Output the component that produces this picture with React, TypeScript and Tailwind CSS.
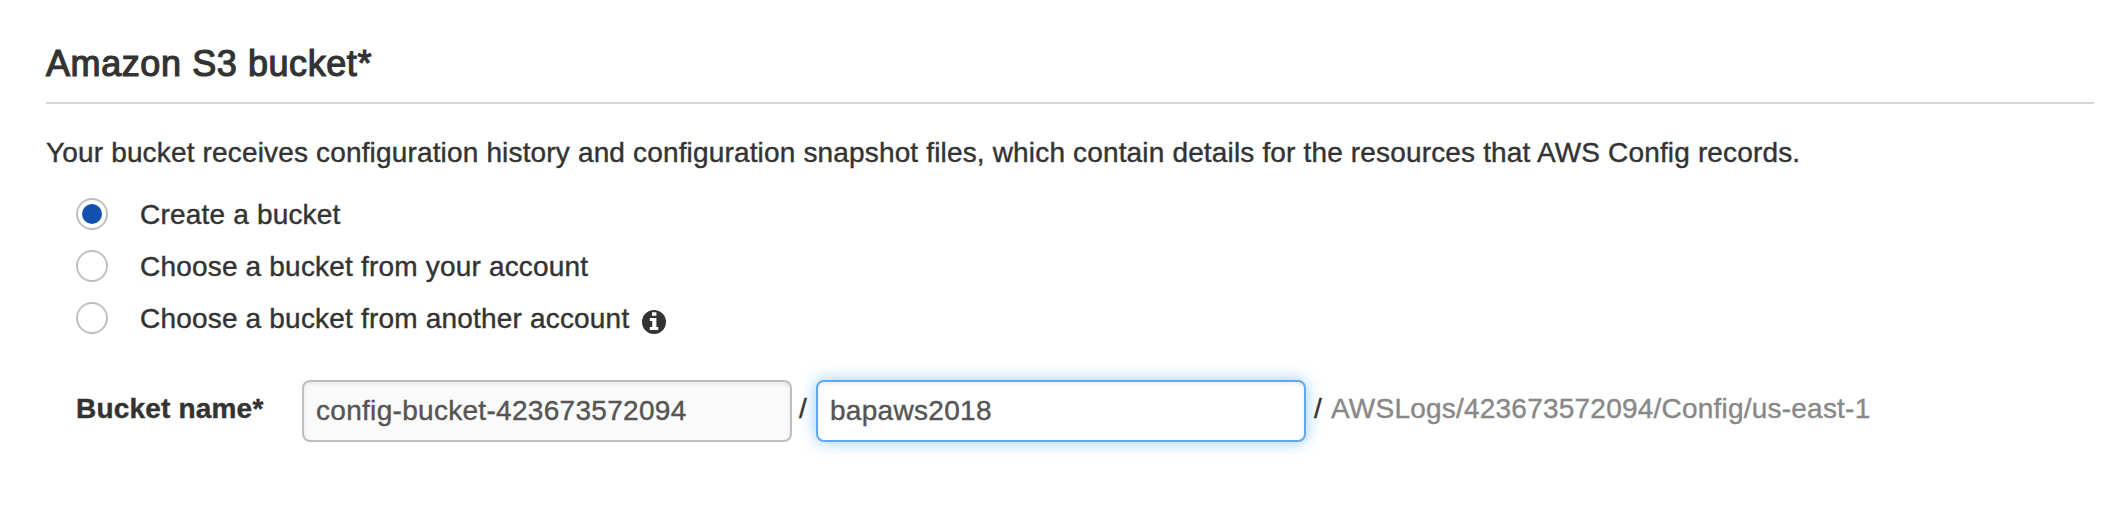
type Option = { label: string; info?: boolean };

const options: Option[] = [
  { label: "Create a bucket" },
  { label: "Choose a bucket from your account" },
  { label: "Choose a bucket from another account", info: true },
];

function Radio({ checked }: { checked: boolean }) {
  return (
    <span className="flex h-8 w-8 shrink-0 items-center justify-center rounded-full border-2 border-[#c0c0c0] bg-white">
      {checked && <span className="h-5 w-5 rounded-full bg-[#1150af]" />}
    </span>
  );
}

function InfoIcon() {
  return (
    <svg viewBox="0 0 24 24" className="mt-2 ml-[13px] h-6 w-6">
      <circle cx="12" cy="12" r="12" fill="#333" />
      <path d="M10 2.3h4.4v3.5H10zM7.8 8h6.6v9h1.8v3H7.8v-3h2.4v-6H7.8z" fill="#fff" />
    </svg>
  );
}

export default function App() {
  return (
    <main className="h-[528px] w-[2114px] bg-white pt-10 pr-5 pl-[46px] font-['Liberation_Sans',Arial,sans-serif] text-[28px] leading-[40px] tracking-[0.19px] text-[#333] [-webkit-text-stroke:0.4px_currentColor]">
      <h2 className="h-16 border-b-2 border-[#d5d5d5] text-[36px] leading-[48px] tracking-[0.58px] [-webkit-text-stroke:1.2px_#333]">
        Amazon S3 bucket*
      </h2>
      <p className="mt-[29px] tracking-[0.16px] whitespace-nowrap">
        Your bucket receives configuration history and configuration snapshot files, which contain details for the
        resources that AWS Config records.
      </p>
      <div className="mt-[15px] flex flex-col pl-[30px]">
        {options.map((option, index) => (
          <label key={option.label} className="flex h-[52px] items-center whitespace-nowrap">
            <Radio checked={index === 0} />
            <span className="ml-8 pt-0.5">{option.label}</span>
            {option.info && <InfoIcon />}
          </label>
        ))}
      </div>
      <div className="mt-9 flex items-center pl-[30px] whitespace-nowrap">
        <span className="w-[226px] pb-1 font-bold">Bucket name*</span>
        <div className="flex h-[62px] w-[490px] items-center rounded-lg border-2 border-[#bfbfbf] bg-[#fafafa] px-3 tracking-[0.3px] text-[#555] shadow-[inset_0_2px_4px_rgba(0,0,0,0.08)]">
          config-bucket-423673572094
        </div>
        <span className="w-6 pb-1 pl-[7px]">/</span>
        <div className="flex h-[62px] w-[490px] items-center rounded-lg border-2 border-[#62a8ee] bg-white px-3 tracking-[0.3px] text-[#555] shadow-[inset_0_2px_4px_rgba(0,0,0,0.08),0_0_16px_rgba(82,168,236,0.6)]">
          bapaws2018
        </div>
        <span className="w-[25px] pb-1 pl-2">/</span>
        <span className="pb-1 tracking-[0.22px] text-[#888]">AWSLogs/423673572094/Config/us-east-1</span>
      </div>
    </main>
  );
}
